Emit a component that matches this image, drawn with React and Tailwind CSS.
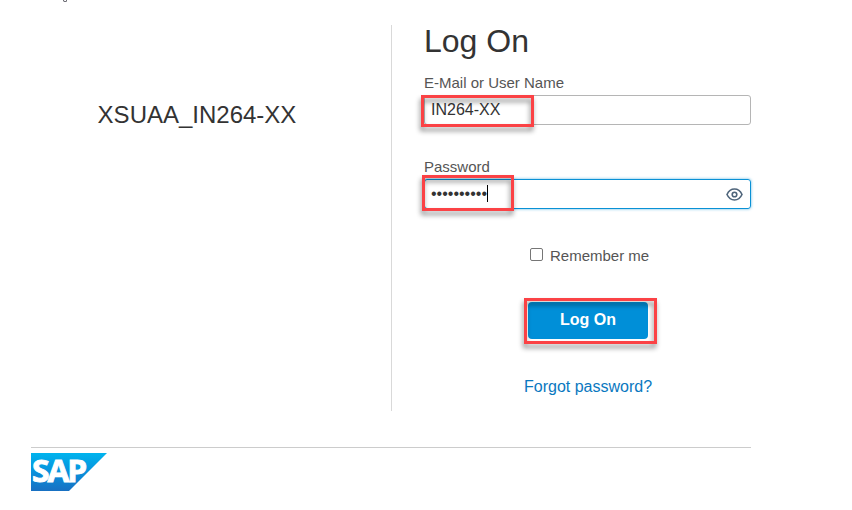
function Highlight({ className }) {
  return (
    <div
      className={`pointer-events-none absolute border-3 border-[#fb4245] drop-shadow-[-1px_4px_2.5px_rgba(0,0,0,0.45)] ${className}`}
    />
  );
}

function EyeIcon() {
  return (
    <svg className="h-[13px] w-[17px]" viewBox="0 0 17 13" fill="none" stroke="#4f657b" strokeWidth="1.6">
      <path d="M1 6.5C2.6 3 5.3 1 8.5 1S14.4 3 16 6.5C14.4 10 11.7 12 8.5 12S2.6 10 1 6.5Z" />
      <circle cx="8.5" cy="6.5" r="2.3" />
    </svg>
  );
}

function SapLogo() {
  return (
    <svg className="block h-[38px] w-[76px] overflow-visible" viewBox="0 0 76 38" role="img" aria-label="SAP">
      <defs>
        <linearGradient id="sap" x1="0" y1="0" x2="0" y2="1">
          <stop offset="0" stopColor="#00b4ee" />
          <stop offset="0.5" stopColor="#0891dc" />
          <stop offset="1" stopColor="#1870c2" />
        </linearGradient>
      </defs>
      <path d="M0 0H76L38 38H0Z" fill="url(#sap)" />
      <text
        x="1"
        y="29"
        fill="#fff"
        stroke="#fff"
        strokeWidth="0.9"
        fontFamily="'Open Sans', sans-serif"
        fontWeight="700"
        fontSize="30"
        textLength="53"
        lengthAdjust="spacingAndGlyphs"
        letterSpacing="-2"
      >
        SAP
      </text>
    </svg>
  );
}

export default function App() {
  return (
    <div className="h-[510px] w-[852px] overflow-hidden bg-white font-['Liberation_Sans',Arial,sans-serif] text-[#333]">
      <div className="h-[25px] pl-[63px]">
        <div className="h-[2px] w-[4px] rounded-b-[2px] border-x border-b border-[#55555f]" />
      </div>
      <main className="ml-[31px] w-[720px]">
        <div className="flex h-[386px]">
          <section className="w-[361px] border-r border-[#d9d9d9] pt-[75px] pr-7 text-center">
            <h2 className="text-2xl leading-[30px]">XSUAA_IN264-XX</h2>
          </section>
          <section className="w-[359px] pl-8">
            <h1 className="h-[49px] text-[32px] leading-[33px]">Log On</h1>
            <label className="block h-[21px] text-[15px] leading-[18px] text-[#555]">E-Mail or User Name</label>
            <div className="relative h-[30px] rounded-[3px] border border-[#b5b5b5] pl-[6px] text-base leading-[27px]">
              IN264-XX
              <Highlight className="-top-px -left-[4px] h-[32px] w-[113px]" />
            </div>
            <label className="mt-[33px] block h-[21px] text-[15px] leading-[18px] text-[#555]">Password</label>
            <div className="relative flex h-[30px] items-center justify-between rounded-[3px] border border-[#0a91d5] pr-[7px] pl-[6px] shadow-[0_0_3px_#0a91d5aa]">
              <div className="flex items-center">
                <span className="text-base">••••••••••</span>
                <span className="-mt-px h-[17px] w-px bg-black" />
              </div>
              <EyeIcon />
              <Highlight className="-top-[5px] -left-[3px] h-[36px] w-[92px]" />
            </div>
            <div className="mt-[37px] flex h-5 items-center pl-[106px] text-[15px] text-[#555]">
              <span className="mt-[-3px] mr-[7px] size-[13px] rounded-[2px] border border-[#767676]" />
              Remember me
            </div>
            <div className="relative mt-9 ml-[104px] h-[37px] w-[120px] rounded-[4px] bg-[#008fd8] text-center text-base leading-[35px] font-bold text-white">
              Log On
              <Highlight className="-top-[4px] -left-[4px] h-[46px] w-[133px]" />
            </div>
            <a className="mt-[38px] ml-[100px] block text-base leading-5 text-[#0a78bf]">Forgot password?</a>
          </section>
        </div>
        <footer className="mt-9 border-t border-[#ccc] pt-[5px]">
          <SapLogo />
        </footer>
      </main>
    </div>
  );
}
